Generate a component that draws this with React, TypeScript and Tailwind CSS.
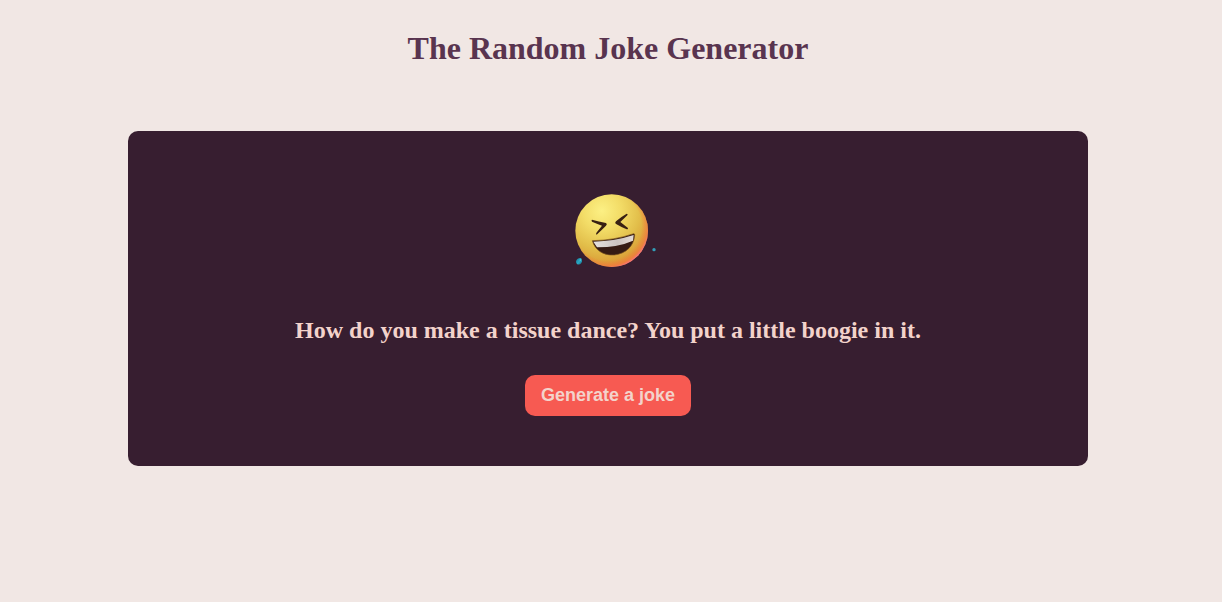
import { useState } from "react";

const jokes = [
  "How do you make a tissue dance? You put a little boogie in it.",
  "Why don't eggs tell jokes? They'd crack each other up.",
  "What do you call a fake noodle? An impasta.",
];

function LaughingFace() {
  return (
    <svg className="size-25" viewBox="-6 0 300 300" role="img" aria-label="Laughing face">
      <defs>
        <radialGradient id="face" gradientUnits="userSpaceOnUse" cx="125" cy="92" r="185">
          <stop offset="0" stopColor="#fcf084" />
          <stop offset="0.3" stopColor="#f3dd68" />
          <stop offset="0.62" stopColor="#e2be4a" />
          <stop offset="0.85" stopColor="#dba038" />
          <stop offset="1" stopColor="#e5792d" />
        </radialGradient>
        <radialGradient id="rim" gradientUnits="userSpaceOnUse" cx="142" cy="138" r="128">
          <stop offset="0.8" stopColor="#f47a38" stopOpacity="0" />
          <stop offset="0.94" stopColor="#f27a42" stopOpacity="0.7" />
          <stop offset="1" stopColor="#fa6f8c" />
        </radialGradient>
        <linearGradient id="teeth" x1="0" y1="0" x2="1" y2="0">
          <stop offset="0" stopColor="#e6e1de" />
          <stop offset="0.6" stopColor="#cbc4c0" />
          <stop offset="1" stopColor="#e4dad4" />
        </linearGradient>
        <linearGradient id="drop" x1="0" y1="0" x2="1" y2="1">
          <stop offset="0" stopColor="#147896" />
          <stop offset="0.55" stopColor="#2aa9c4" />
          <stop offset="1" stopColor="#126b89" />
        </linearGradient>
        <clipPath id="mouth">
          <path d="M97 182Q163 181 221 161Q225 160 224 167C221 199 197 221 163 225C130 227 105 211 97 182Z" />
        </clipPath>
      </defs>
      <circle cx="155" cy="152" r="109" fill="url(#face)" />
      <circle cx="155" cy="152" r="109" fill="url(#rim)" />
      <path d="M96 119Q116 124 138 129Q143 132 138 137Q126 149 110 164Q106 163 111 156L126 137Q110 131 96 125Q93 121 96 119Z" fill="#382013" />
      <path d="M200 101Q205 101 202 106L181 126L203 143Q206 148 200 148Q184 141 167 131Q164 128 168 124Q182 111 200 101Z" fill="#382013" />
      <path d="M97 182Q163 181 221 161Q225 160 224 167C221 199 197 221 163 225C130 227 105 211 97 182Z" fill="#351b13" stroke="#7d551f" strokeWidth="2" />
      <g clipPath="url(#mouth)">
        <path d="M100 185Q163 184 221 165L219 182Q174 202 111 202Z" fill="url(#teeth)" />
      </g>
      <path d="M63 234C56 233 48 238 48 245C49 257 65 256 66 244Q66 236 63 234Z" fill="url(#drop)" />
      <circle cx="61" cy="240" r="2" fill="#62d0df" />
      <circle cx="282" cy="209" r="5" fill="#329db7" />
    </svg>
  );
}

export default function App() {
  const [index, setIndex] = useState(0);

  return (
    <main className="flex min-h-screen flex-col items-center bg-[#f1e7e4] pt-[30px] pr-1.5 pb-8 font-['Liberation_Serif',serif]">
      <h1 className="text-center text-[32px] leading-[37px] font-bold text-[#59344f]">
        The Random Joke Generator
      </h1>
      <section className="mt-16 flex w-full max-w-[960px] flex-col items-center rounded-[10px] bg-[#371e30] px-8 pt-[49px] pb-[50px]">
        <LaughingFace />
        <p className="mt-9 text-center text-[24px] leading-7 font-bold text-[#f3d3cb]" aria-live="polite">
          {jokes[index]}
        </p>
        <button
          type="button"
          onClick={() => setIndex((index + 1) % jokes.length)}
          className="mt-[31px] cursor-pointer rounded-[10px] bg-[#f75a52] px-4 py-2.5 font-['Liberation_Sans',sans-serif] text-[18px] leading-[21px] font-bold text-[#f3d3cb]"
        >
          Generate a joke
        </button>
      </section>
    </main>
  );
}
